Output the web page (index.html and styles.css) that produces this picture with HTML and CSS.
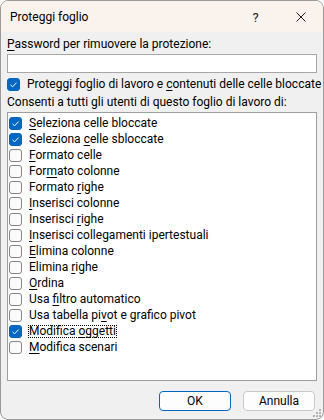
FILE: index.html
```html
<!DOCTYPE html>
<html lang="it">
<head>
    <meta charset="UTF-8">
    <meta name="viewport" content="width=device-width, initial-scale=1.0">
    <title>Proteggi foglio</title>
    <link rel="stylesheet" href="styles.css">
</head>
<body>
    <div class="dialog">
        <div class="title-bar">
            <span class="title-text">Proteggi foglio</span>
            <button class="title-button help-button">?</button>
            <button class="title-button close-button">
                <svg width="10" height="10" viewBox="0 0 10 10"><path d="M0.5 0.5 L9.5 9.5 M9.5 0.5 L0.5 9.5" stroke="#1a1a1a" stroke-width="1" fill="none"/></svg>
            </button>
        </div>

        <div class="dialog-body">
            <div class="field-label"><u>P</u>assword per rimuovere la protezione:</div>
            <input class="password-input" type="password">

            <label class="check-row">
                <span class="check-box checked">
                    <svg width="13" height="13" viewBox="0 0 13 13"><path d="M3.5 6.8 L5.6 8.8 L9.6 4.6" stroke="#fff" stroke-width="1" fill="none"/></svg>
                </span>
                <span>Proteggi foglio di lavoro e <u>c</u>ontenuti delle celle bloccate</span>
            </label>

            <div class="field-label">Consenti a tutti gli utenti di questo foglio di lavoro di:</div>

            <div class="permission-list">
                <label class="check-row">
                    <span class="check-box checked"><svg width="13" height="13" viewBox="0 0 13 13"><path d="M3.5 6.8 L5.6 8.8 L9.6 4.6" stroke="#fff" stroke-width="1" fill="none"/></svg></span>
                    <span><u>S</u>eleziona celle bloccate</span>
                </label>
                <label class="check-row">
                    <span class="check-box checked"><svg width="13" height="13" viewBox="0 0 13 13"><path d="M3.5 6.8 L5.6 8.8 L9.6 4.6" stroke="#fff" stroke-width="1" fill="none"/></svg></span>
                    <span>Seleziona <u>c</u>elle sbloccate</span>
                </label>
                <label class="check-row">
                    <span class="check-box"></span>
                    <span><u>F</u>ormato celle</span>
                </label>
                <label class="check-row">
                    <span class="check-box"></span>
                    <span>For<u>m</u>ato colonne</span>
                </label>
                <label class="check-row">
                    <span class="check-box"></span>
                    <span>Formato <u>r</u>ighe</span>
                </label>
                <label class="check-row">
                    <span class="check-box"></span>
                    <span><u>I</u>nserisci colonne</span>
                </label>
                <label class="check-row">
                    <span class="check-box"></span>
                    <span>Inserisci <u>r</u>ighe</span>
                </label>
                <label class="check-row">
                    <span class="check-box"></span>
                    <span><u>I</u>nserisci collegamenti ipertestuali</span>
                </label>
                <label class="check-row">
                    <span class="check-box"></span>
                    <span><u>E</u>limina colonne</span>
                </label>
                <label class="check-row">
                    <span class="check-box"></span>
                    <span>Elimina <u>r</u>ighe</span>
                </label>
                <label class="check-row">
                    <span class="check-box"></span>
                    <span><u>O</u>rdina</span>
                </label>
                <label class="check-row">
                    <span class="check-box"></span>
                    <span>Usa <u>f</u>iltro automatico</span>
                </label>
                <label class="check-row">
                    <span class="check-box"></span>
                    <span>Usa tabella pi<u>v</u>ot e grafico pivot</span>
                </label>
                <label class="check-row">
                    <span class="check-box checked"><svg width="13" height="13" viewBox="0 0 13 13"><path d="M3.5 6.8 L5.6 8.8 L9.6 4.6" stroke="#fff" stroke-width="1" fill="none"/></svg></span>
                    <span class="focus-text">Modifica <u>o</u>ggetti</span>
                </label>
                <label class="check-row">
                    <span class="check-box"></span>
                    <span><u>M</u>odifica scenari</span>
                </label>
            </div>

            <div class="button-row">
                <button class="dialog-button default-button">OK</button>
                <button class="dialog-button">Annulla</button>
            </div>
        </div>

        <svg class="resize-grip" width="10" height="10" viewBox="0 0 10 10">
            <rect x="7" y="1" width="2" height="2" fill="#b5b5b5"/>
            <rect x="4" y="4" width="2" height="2" fill="#b5b5b5"/>
            <rect x="7" y="4" width="2" height="2" fill="#b5b5b5"/>
            <rect x="1" y="7" width="2" height="2" fill="#b5b5b5"/>
            <rect x="4" y="7" width="2" height="2" fill="#b5b5b5"/>
            <rect x="7" y="7" width="2" height="2" fill="#b5b5b5"/>
        </svg>
    </div>
</body>
</html>
```

FILE: styles.css
```css
body {
    margin: 0;
    background-color: #ffffff;
    font-family: Roboto, "Liberation Sans", sans-serif;
    font-size: 12px;
    color: #000;
}

.dialog {
    position: relative;
    width: 324px;
    height: 420px;
    box-sizing: border-box;
    border: 1px solid #9a9a9a;
    border-radius: 8px;
    overflow: hidden;
    background-color: #f0f0f0;
}

.title-bar {
    display: flex;
    align-items: center;
    height: 31px;
    background-color: #f9f2ed;
}

.title-text {
    flex: 1;
    padding-left: 9px;
    padding-top: 1px;
}

.title-button {
    width: 45px;
    height: 31px;
    border: none;
    background: transparent;
    font-family: Roboto, sans-serif;
    font-size: 13px;
    color: #1a1a1a;
    padding: 0;
    display: flex;
    align-items: center;
    justify-content: center;
}

.help-button {
    padding-top: 1px;
}

.dialog-body {
    padding: 4px 6px 0 6px;
}

.field-label {
    height: 16px;
    line-height: 16px;
    white-space: nowrap;
}

u {
    text-underline-offset: 2px;
}

.password-input {
    display: block;
    width: 100%;
    height: 19px;
    box-sizing: border-box;
    margin: 2px 0 3px 0;
    border: 1px solid #a6a6a6;
    background-color: #fff;
}

.check-row {
    display: flex;
    align-items: center;
    gap: 7px;
    height: 16px;
    line-height: 16px;
    white-space: nowrap;
}

.check-row + .field-label {
    margin-top: 2px;
}

.check-box {
    width: 13px;
    height: 13px;
    box-sizing: border-box;
    border: 1px solid #858585;
    border-radius: 3px;
    background-color: #fbfbfb;
    flex-shrink: 0;
    display: flex;
}

.check-box.checked {
    background-color: #0067c0;
    border-color: #0067c0;
}

.check-box svg {
    margin: -1px;
}

.permission-list {
    margin-top: 2px;
    height: 269px;
    box-sizing: border-box;
    border: 1px solid #9e9e9e;
    background-color: #fff;
    padding: 2px 0 0 1px;
    display: flex;
    flex-direction: column;
}

.focus-text {
    outline: 1px dotted #000;
    outline-offset: -1px;
    padding: 0 1px;
    margin-left: -1px;
    line-height: 13px;
}

.button-row {
    display: flex;
    justify-content: flex-end;
    gap: 12px;
    margin-top: 10px;
    padding-right: 2px;
}

.dialog-button {
    width: 72px;
    height: 20px;
    box-sizing: border-box;
    border: 1px solid #c9c9c9;
    border-radius: 4px;
    background-color: #fdfdfd;
    font-family: Roboto, "Liberation Sans", sans-serif;
    font-size: 12px;
    color: #000;
    padding: 0;
}

.default-button {
    border-color: #0067c0;
}

.resize-grip {
    position: absolute;
    right: 1px;
    bottom: 1px;
}
```
